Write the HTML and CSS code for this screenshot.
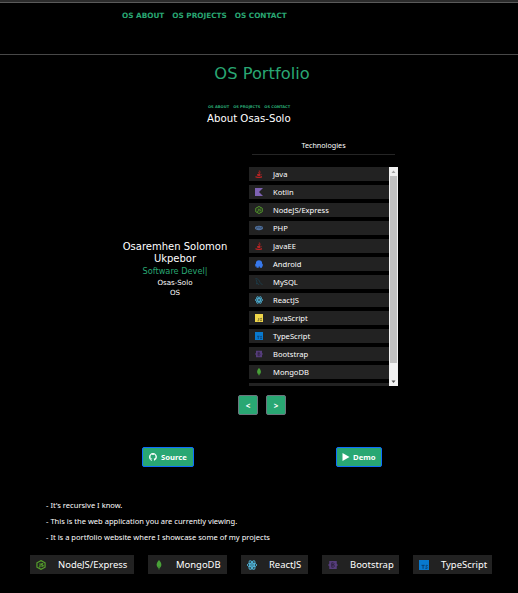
FILE: index.html
```html
<!DOCTYPE html>
<html lang="en">
<head>
<meta charset="utf-8">
<title>OS Portfolio</title>
<link rel="stylesheet" href="styles.css">
</head>
<body>
<svg class="defs" aria-hidden="true">
  <symbol id="java" viewBox="0 0 16 16"><path d="M8.500 1c2 2-2 3.400-1 5l1 1.500M11 4c-2 1-2.500 2-1.500 3.500" fill="none" stroke="#b52424" stroke-width="2"/><path d="M4 8h7l-1 4H5zM1 12c2 2 11 2 13 0v3c-3 1.500-10 1.500-13 0z" fill="#b52424"/><path d="M11 8.500c3-1 3 2 0 2.500" fill="none" stroke="#b52424"/></symbol>
  <symbol id="kotlin" viewBox="0 0 16 16"><path d="M0 0h16L8 8l8 8H0z" fill="#7e62b3"/></symbol>
  <symbol id="node" viewBox="0 0 16 16"><path d="M8 1l6.500 3.500v7L8 15l-6.500-3.500v-7z" fill="none" stroke="#56a12c" stroke-width="1.900"/><path d="M6.500 5v5.500q0 1.300-2 .5M11.500 6c-3-1-4 1.300-1.700 1.800 3 .5 2.400 3-1.300 2" fill="none" stroke="#56a12c" stroke-width="1.700"/></symbol>
  <symbol id="php" viewBox="0 0 16 16"><ellipse cx="8" cy="8" rx="8" ry="4.300" fill="#51729f"/><path d="M3 10l1-4h1.500q1 1-1 2M7 9l1-4M8 7h1.300L9 9M11 10l1-4h1.500q1 1-1 2" fill="none" stroke="#273a55"/></symbol>
  <symbol id="android" viewBox="0 0 16 16"><path d="M2 4q1-3 6-3.500Q13 1 14 4v3l1.500 1v5H14v2.500H9.500V13h-2v2.500H3V13H.5V8L2 7z" fill="#3778eb"/></symbol>
  <symbol id="mysql" viewBox="0 0 16 16"><path d="M1 1c5 0 8 4 9 8l5 5M2 3l2 5-1 4 3-1 2 3" fill="none" stroke="#1b4354" stroke-width="1.500"/></symbol>
  <symbol id="react" viewBox="0 0 16 16"><g fill="none" stroke="#4fb5da" stroke-width="1.600"><ellipse cx="8" cy="8" rx="7.600" ry="3"/><ellipse cx="8" cy="8" rx="7.600" ry="3" transform="rotate(60 8 8)"/><ellipse cx="8" cy="8" rx="7.600" ry="3" transform="rotate(120 8 8)"/></g><circle cx="8" cy="8" r="1.600" fill="#4fb5da"/></symbol>
  <symbol id="js" viewBox="0 0 16 16"><path d="M0 0h16v16H0z" fill="#efd64a"/><path d="M7.500 8v4.500q0 2-2.500 1M14 9c-3-1.500-4 1-2 2s2 3.500-2 2" fill="none" stroke="#4d4928" stroke-width="1.400"/></symbol>
  <symbol id="ts" viewBox="0 0 16 16"><path d="M0 0h16v16H0z" fill="#0879cf"/><path d="M4 8.500h5M6.500 8.500V14M14 9c-3-1.500-4 1-2 2s2 3.500-2 2" fill="none" stroke="#0c3765" stroke-width="1.400"/></symbol>
  <symbol id="bootstrap" viewBox="0 0 16 16"><path d="M2 1.500h12V6l2 2-2 2v4.500H2V10L0 8l2-2z" fill="#563d7c"/><path d="M6 4.500h2.500q3 1.500 0 3.300H6zm0 3.300h3q3 2 0 3.700H6z" fill="none" stroke="#2b2139" stroke-width="1.300"/></symbol>
  <symbol id="mongo" viewBox="0 0 16 16"><path d="M8 0c6 6 4 11 0 14-4-3-6-8 0-14z" fill="#49a238"/><path d="M8 10v6" stroke="#37732d"/></symbol>
</svg>

<header class="topbar">
  <nav class="nav"><a>OS ABOUT</a><a>OS PROJECTS</a><a>OS CONTACT</a></nav>
</header>

<main>
  <h1 class="title">OS Portfolio</h1>
  <section class="preview">
    <div class="about-head">
      <nav class="mini-nav"><a>OS ABOUT</a><a>OS PROJECTS</a><a>OS CONTACT</a></nav>
      <h2>About Osas-Solo</h2>
    </div>
    <div class="about">
      <div class="person">
        <h3>Osaremhen Solomon Ukpebor</h3>
        <p class="typed">Software Devel|</p>
        <p>Osas-Solo</p>
        <p>OS</p>
      </div>
      <div class="tech">
        <h4>Technologies</h4>
        <div class="tech-box">
          <ul class="tech-list">
            <li><svg><use href="#java"/></svg>Java</li>
            <li><svg><use href="#kotlin"/></svg>Kotlin</li>
            <li><svg><use href="#node"/></svg>NodeJS/Express</li>
            <li><svg><use href="#php"/></svg>PHP</li>
            <li><svg><use href="#java"/></svg>JavaEE</li>
            <li><svg><use href="#android"/></svg>Android</li>
            <li><svg><use href="#mysql"/></svg>MySQL</li>
            <li><svg><use href="#react"/></svg>ReactJS</li>
            <li><svg><use href="#js"/></svg>JavaScript</li>
            <li><svg><use href="#ts"/></svg>TypeScript</li>
            <li><svg><use href="#bootstrap"/></svg>Bootstrap</li>
            <li><svg><use href="#mongo"/></svg>MongoDB</li>
            <li></li>
          </ul>
          <div class="scrollbar">
            <svg class="arrow up" viewBox="0 0 9 9"><path d="M2.500 6L4.500 3.500 6.500 6z"/></svg>
            <div class="thumb"></div>
            <svg class="arrow" viewBox="0 0 9 9"><path d="M2.500 3.500L4.500 6l2-2.500z"/></svg>
          </div>
        </div>
      </div>
    </div>
  </section>

  <div class="pager"><button>&lt;</button><button>&gt;</button></div>

  <div class="links">
    <a class="btn"><svg viewBox="0 0 16 16"><path fill="#fff" d="M8 0C3.600 0 0 3.600 0 8c0 3.500 2.300 6.500 5.500 7.600.4.100.5-.2.500-.4v-1.500c-2.200.5-2.700-1-2.700-1-.4-.9-.9-1.200-.9-1.200-.7-.5.100-.5.100-.5.800.1 1.200.8 1.200.8.700 1.300 1.900.9 2.300.7.100-.5.300-.9.500-1.100-1.800-.2-3.600-.9-3.600-4 0-.9.300-1.600.800-2.100-.1-.2-.4-1 .1-2.100 0 0 .7-.2 2.200.8 1.300-.4 2.700-.4 4 0 1.500-1 2.200-.8 2.200-.8.400 1.100.2 1.900.1 2.100.5.600.8 1.300.8 2.100 0 3.100-1.900 3.700-3.700 3.900.3.300.6.800.6 1.500v2.300c0 .2.100.5.500.4A8 8 0 0 0 8 0z"/></svg>Source</a>
    <a class="btn demo"><svg viewBox="0 0 16 16"><path fill="#fff" d="M1 0l14 8-14 8z"/></svg>Demo</a>
  </div>

  <div class="notes">
    <p>- It's recursive I know.</p>
    <p>- This is the web application you are currently viewing.</p>
    <p>- It is a portfolio website where I showcase some of my projects</p>
  </div>

  <ul class="tags">
    <li><svg><use href="#node"/></svg>NodeJS/Express</li>
    <li><svg><use href="#mongo"/></svg>MongoDB</li>
    <li><svg><use href="#react"/></svg>ReactJS</li>
    <li><svg><use href="#bootstrap"/></svg>Bootstrap</li>
    <li><svg><use href="#ts"/></svg>TypeScript</li>
  </ul>
</main>
</body>
</html>
```
FILE: styles.css
```css
* { box-sizing: border-box; margin: 0; padding: 0; }
html, body { background: #000; }
body {
  width: 518px;
  height: 593px;
  overflow: hidden;
  color: #fff;
  font-family: "DejaVu Sans", sans-serif;
}
ul { list-style: none; }
.defs { display: none; }

.topbar {
  height: 55px;
  border-top: 2px solid #2b2b2b;
  border-bottom: 1px solid #484848;
  box-shadow: inset 0 1px #5a5a5a;
  padding: 9px 0 0 122px;
}
.nav, .mini-nav { display: flex; color: #29a773; font-weight: bold; white-space: nowrap; }
.nav { gap: 8px; font-size: 7.3px; line-height: 10px; }

.title {
  margin-top: 9px;
  padding-left: 6px;
  text-align: center;
  color: #29a773;
  font-weight: normal;
  font-size: 16.3px;
  line-height: 20px;
}

.preview { margin-top: 21px; }
.about-head { width: 84px; margin-left: 207px; }
.mini-nav { gap: 4px; margin-left: 1px; font-size: 3.65px; line-height: 5px; }
.about-head h2 { font-weight: normal; font-size: 10.2px; line-height: 14px; margin-top: 2px; white-space: nowrap; }

.about { display: flex; margin-top: 13px; }
.person { width: 126px; margin-left: 112px; padding-top: 102px; text-align: center; }
.person h3 { font-weight: normal; font-size: 10px; line-height: 12px; }
.person p { font-size: 7.1px; line-height: 10px; }
.person .typed { color: #29a773; font-size: 8.2px; line-height: 13px; }

.tech { width: 149px; margin-left: 11px; font-family: "Noto Sans", sans-serif; }
.tech h4 {
  height: 16px;
  margin: 0 3px;
  border-bottom: 1px solid #252525;
  font-weight: normal;
  font-size: 7.2px;
  line-height: 12px;
  text-align: center;
}
.tech-box { display: flex; height: 219px; margin-top: 12px; overflow: hidden; }
.tech-list { flex: 1; }
.tech-list li {
  display: flex;
  align-items: center;
  height: 14px;
  margin-bottom: 4px;
  padding-left: 6px;
  background: #222;
  font-size: 7.6px;
}
.tech-list svg { width: 8px; height: 8px; margin-right: 10px; }

.scrollbar { display: flex; flex-direction: column; width: 9px; background: #f1f1f1; }
.arrow { width: 9px; height: 9px; fill: #505050; }
.arrow.up { fill: #a3a3a3; }
.thumb { width: 7px; height: 187px; margin: 0 1px auto; background: #c1c1c1; }

.pager { display: flex; gap: 8px; margin: 9px 0 0 238px; }
.pager button {
  width: 20px;
  height: 20px;
  border: 1px solid #6c757d;
  border-radius: 2px;
  background: #29a773;
  color: #fff;
  font: bold 8px "Noto Sans", sans-serif;
}

.links { display: flex; justify-content: space-between; margin: 32px 136px 0 142px; }
.btn {
  display: flex;
  align-items: center;
  width: 52px;
  height: 20px;
  padding-left: 6px;
  border: 1px solid #0d6efd;
  border-radius: 2px;
  background: #29a773;
  font: bold 7.7px "Noto Sans", sans-serif;
}
.btn svg { width: 8px; height: 8px; margin-right: 4px; }
.btn.demo { width: 46px; padding-left: 5px; }
.btn.demo svg { margin-right: 3px; }

.notes { margin: 30px 0 0 46px; font: 7.55px/16px "Noto Sans", sans-serif; white-space: nowrap; }

.tags { display: flex; gap: 14px; margin: 10px 0 0 30px; font: 9.450px "Noto Sans", sans-serif; }
.tags li { display: flex; align-items: center; height: 19px; padding-left: 6px; background: #222; white-space: nowrap; }
.tags li:nth-child(1) { width: 104px; }
.tags li:nth-child(2) { width: 79px; }
.tags li:nth-child(3) { width: 67px; }
.tags li:nth-child(4) { width: 77px; }
.tags li:nth-child(5) { width: 79px; }
.tags svg { width: 10px; height: 10px; margin-right: 12px; flex: none; }
```
